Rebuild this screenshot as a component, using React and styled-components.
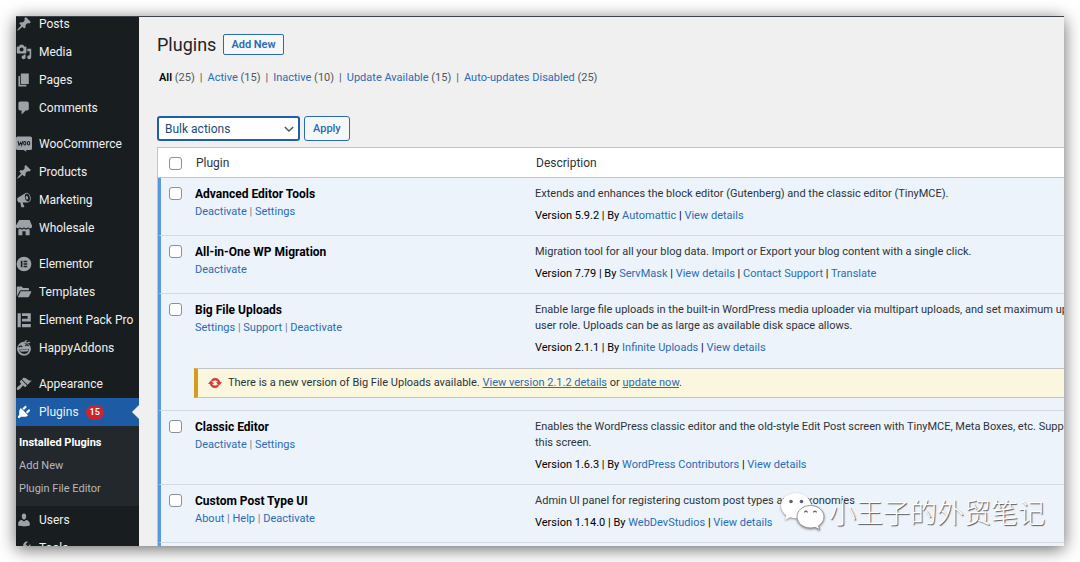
import React from "react";
import styled, { createGlobalStyle, css } from "styled-components";

const GlobalStyle = createGlobalStyle`
  * {
    box-sizing: border-box;
  }
  body {
    margin: 0;
    background: #ffffff;
    color: #2c3338;
    font-family: Roboto, "Liberation Sans", sans-serif;
    font-size: 11px;
    line-height: 16px;
  }
  a {
    color: #2a6cb4;
    text-decoration: none;
  }
`;

const Window = styled.div`
  position: relative;
  display: flex;
  height: calc(100vh - 32px);
  margin: 16px;
  overflow: hidden;
  background: #f0f0f0;
  border-top: 1px solid #3c434a;
`;

const Shadow = styled.div`
  display: flow-root;
  & > ${Window} {
    box-shadow: 0 3px 16px rgba(0, 0, 0, 0.6);
  }
`;

const Sidebar = styled.nav`
  flex: 0 0 123px;
  background: #181d1f;
`;

const Menu = styled.ul`
  list-style: none;
  margin: -7px 0 0;
  padding: 0;
`;

const MenuGroup = styled.li`
  margin-bottom: 8px;
  ul {
    list-style: none;
    margin: 0;
    padding: 0;
  }
`;

const MenuLink = styled.a`
  position: relative;
  display: flex;
  align-items: center;
  gap: 7px;
  height: 28px;
  color: #f0f0f1;
  font-size: 12px;
  white-space: nowrap;
  svg {
    flex: none;
    width: 16px;
    height: 16px;
    color: #9ca2a7;
  }
  ${({ $active }) =>
    $active &&
    css`
      background: #1d5ca4;
      svg {
        color: #ffffff;
      }
      &::after {
        content: "";
        position: absolute;
        right: 0;
        top: 7px;
        border: 7px solid transparent;
        border-left-width: 0;
        border-right-color: #f0f0f0;
      }
    `}
`;

const Badge = styled.span`
  padding: 0 4px;
  border-radius: 8px;
  background: #ca2430;
  color: #ffffff;
  font-size: 9px;
  line-height: 15px;
  font-weight: 600;
`;

const SubMenu = styled.ul`
  padding: 5px 0 6px !important;
  background: #23282c;
`;

const SubLink = styled.a`
  display: block;
  padding-left: 3px;
  color: ${({ $current }) => ($current ? "#ffffff" : "#b4b9be")};
  font-size: 11px;
  font-weight: ${({ $current }) => ($current ? 700 : 400)};
  line-height: 23px;
`;

const Main = styled.main`
  flex: 1;
  min-width: 0;
  padding: 17px 0 0 18px;
  overflow: hidden;
`;

const TitleBar = styled.header`
  display: flex;
  align-items: center;
  gap: 7px;
`;

const Title = styled.h1`
  margin: 0;
  color: #1d2327;
  font-size: 18px;
  font-weight: 400;
  line-height: 21px;
`;

const Button = styled.button`
  height: ${({ $small }) => ($small ? 21 : 25)}px;
  padding: 0 ${({ $small }) => ($small ? 7 : 8)}px;
  border: 1px solid #2a6cb4;
  border-radius: ${({ $small }) => ($small ? 2 : 3)}px;
  background: #f6f7f7;
  color: #2a6cb4;
  font-family: inherit;
  font-size: 11px;
  font-weight: ${({ $small }) => ($small ? 600 : 500)};
`;

const Filters = styled.ul`
  display: flex;
  gap: 5px;
  list-style: none;
  margin: 15px 0 0;
  padding: 0 0 0 2px;
  color: #50575e;
  white-space: nowrap;
  li + li::before {
    content: "|";
    margin-right: 5px;
  }
`;

const FilterLink = styled.a`
  color: ${({ $current }) => ($current ? "#000000" : "#2a6cb4")};
  font-weight: ${({ $current }) => ($current ? 600 : 400)};
`;

const Actions = styled.div`
  display: flex;
  gap: 4px;
  margin: 30px 0 6px;
`;

const SelectBox = styled.label`
  position: relative;
  display: flex;
  svg {
    position: absolute;
    right: 5px;
    top: 7px;
    width: 12px;
    height: 12px;
    color: #50575e;
    pointer-events: none;
  }
`;

const Select = styled.select`
  appearance: none;
  width: 143px;
  height: 25px;
  padding: 0 20px 0 6px;
  border: 2px solid #1f5fa8;
  border-radius: 3px;
  background: #ffffff;
  color: #1d4a7a;
  font-family: inherit;
  font-size: 12px;
`;

const Checkbox = styled.input`
  appearance: none;
  display: block;
  width: 13px;
  height: 13px;
  margin: 1px 0 0 8px;
  border: 1px solid #8c8f94;
  border-radius: 3px;
  background: #ffffff;
`;

const Table = styled.table`
  width: calc(100% + 40px);
  table-layout: fixed;
  border: 1px solid #c3c4c7;
  border-spacing: 0;
  background: #ffffff;
  white-space: nowrap;
`;

const CheckCol = styled.col`
  width: 37px;
`;

const NameCol = styled.col`
  width: 340px;
`;

const HeadCell = styled.th`
  padding: ${({ $check }) => ($check ? "7px 0 6px 3px" : "7px 0 6px 1px")};
  border-bottom: 1px solid #c3c4c7;
  font-size: 12px;
  font-weight: 400;
  text-align: left;
`;

const Cell = styled.td`
  padding: 8px 0 ${({ $joined }) => ($joined ? 12 : 11)}px;
  border-bottom: ${({ $joined }) => ($joined ? "0" : "1px solid #d3dce5")};
  ${({ $stripe }) => $stripe && "border-left: 3px solid #5b97dc;"}
  background: #ecf3fb;
  vertical-align: top;
`;

const NoticeCell = styled(Cell)`
  padding: 0 0 12px 33px;
`;

const Name = styled.strong`
  display: block;
  margin-bottom: 2px;
  color: #000000;
  font-size: 12px;
  font-weight: 700;
`;

const Links = styled.div`
  color: #787c82;
`;

const Description = styled.p`
  margin: 0 0 6px;
`;

const Meta = styled.div`
  color: #000000;
`;

const Notice = styled.div`
  display: flex;
  align-items: center;
  gap: 6px;
  height: 30px;
  padding-left: 10px;
  border: 1px solid #c3c4c7;
  border-left: 4px solid #d59b1c;
  background: #fbf7df;
  svg {
    width: 14px;
    height: 14px;
    color: #d63638;
    stroke: currentColor;
  }
  a {
    text-decoration: underline;
  }
`;

const Watermark = styled.div`
  position: absolute;
  right: 19px;
  bottom: 14px;
  display: flex;
  align-items: center;
  gap: 3px;
  color: #ffffff;
  font-family: "Noto Sans CJK SC", sans-serif;
  font-size: 27px;
  font-weight: 300;
  line-height: 38px;
  text-shadow: 1px 1px 1px #555555;
  svg {
    width: 46px;
    height: 40px;
    filter: drop-shadow(0 1px 1px #888888);
  }
`;

const paths = {
  pin: "M10.44 3.02l1.82-1.82 6.36 6.35-1.83 1.82c-1.05-.68-2.48-.57-3.41.36l-.75.75c-.92.93-1.04 2.35-.35 3.41l-1.83 1.82-2.41-2.41-2.8 2.79c-.42.42-3.38 2.71-3.8 2.29s1.86-3.39 2.28-3.81l2.79-2.79L4.1 9.36l1.83-1.82c1.05.69 2.48.57 3.4-.36l.75-.75c.93-.92 1.05-2.35.36-3.41z",
  media:
    "M13 11V4c0-.55-.45-1-1-1h-1.67L9 1H5L3.67 3H2c-.55 0-1 .45-1 1v7c0 .55.45 1 1 1h10c.55 0 1-.45 1-1zM7 4.5c1.38 0 2.5 1.12 2.5 2.5S8.38 9.5 7 9.5 4.5 8.38 4.5 7 5.62 4.5 7 4.5zM14 6h5v10.5c0 1.38-1.12 2.5-2.5 2.5S14 17.88 14 16.5s1.12-2.5 2.5-2.5c.17 0 .34.02.5.05V9h-3V6zm-4 8.05V13h2v3.5c0 1.38-1.12 2.5-2.5 2.5S7 17.88 7 16.5 8.12 14 9.5 14c.17 0 .34.02.5.05z",
  page: "M6 15V2h10v13H6zm-1 1h8v2H3V5h2v11z",
  comment:
    "M5 2h9c1.1 0 2 .9 2 2v7c0 1.1-.9 2-2 2h-2l-5 5v-5H5c-1.1 0-2-.9-2-2V4c0-1.1.9-2 2-2z",
  megaphone:
    "M18.15 5.94c.46 1.62.38 3.22-.02 4.48-.42 1.28-1.26 2.18-2.3 2.48-.16.06-.26.06-.4.06-.06.02-.12.02-.18.02-.06.02-.14.02-.22.02h-6.8l2.22 5.5c.02.14-.06.26-.14.34-.08.1-.24.16-.34.16H6.95c-.1 0-.26-.06-.34-.16-.08-.08-.16-.2-.14-.34l-1-5.5H4.25l-.02-.02c-.5.06-1.08-.18-1.54-.62s-.88-1.08-1.06-1.88c-.24-.8-.2-1.56-.02-2.2.18-.62.58-1.08 1.06-1.3l.02-.02 9-5.4c.1-.06.18-.1.24-.16.06-.04.14-.08.24-.12.16-.08.28-.12.5-.18 1.04-.3 2.24.1 3.22.98s1.84 2.24 2.26 3.86zm-2.58 5.98h-.02c.4-.1.74-.34 1.04-.7.58-.7.86-1.76.86-3.04 0-.64-.1-1.3-.28-1.98-.34-1.36-1.02-2.5-1.78-3.24s-1.68-1.1-2.46-.88c-.82.22-1.4.96-1.7 2-.32 1.04-.28 2.36.06 3.72.38 1.36 1 2.5 1.8 3.24.78.74 1.62 1.1 2.48.88zm-2.54-7.08c.22-.04.42-.02.62.04.38.16.76.48 1.02 1s.42 1.2.42 1.78c0 .3-.04.56-.12.8-.18.48-.44.84-.86.94-.34.1-.8-.06-1.14-.4s-.64-.86-.78-1.5c-.18-.62-.12-1.24.02-1.72s.48-.84.82-.94z",
  store:
    "M1 10c.41.29.96.43 1.5.43.55 0 1.09-.14 1.5-.43.62-.46 1-1.17 1-2 0 .83.37 1.54 1 2 .41.29.96.43 1.5.43.55 0 1.09-.14 1.5-.43.62-.46 1-1.17 1-2 0 .83.37 1.54 1 2 .41.29.96.43 1.51.43.54 0 1.08-.14 1.49-.43.62-.46 1-1.17 1-2 0 .83.37 1.54 1 2 .41.29.96.43 1.5.43.55 0 1.09-.14 1.5-.43.63-.46 1-1.17 1-2V7l-3-7H4L0 7v1c0 .83.37 1.54 1 2zm2 8.99h5v-5h4v5h5v-7c-.37-.05-.72-.22-1-.43-.63-.45-1-.73-1-1.56 0 .83-.38 1.11-1 1.56-.41.3-.95.43-1.49.44-.55 0-1.1-.14-1.51-.44-.63-.45-1-.73-1-1.56 0 .83-.38 1.11-1 1.56-.41.3-.95.43-1.5.44-.54 0-1.09-.14-1.5-.44-.63-.45-1-.73-1-1.57 0 .84-.38 1.12-1 1.57-.29.21-.63.38-1 .44v6.99z",
  folder:
    "M1 15.5V4.2c0-.6.4-1 1-1h5l1.8 1.9h6.4c.6 0 1 .4 1 1v1.6H6.3c-.8 0-1.4.4-1.7 1.1zM2.2 16.5L5.6 9.7c.2-.4.5-.6.9-.6h12c.5 0 .8.5.6.9l-2.8 5.7c-.2.5-.7.8-1.2.8z",
  brush:
    "M14.48 11.06L7.41 3.99l1.5-1.5c.5-.56 2.3-.47 3.51.32 1.21.8 1.43 1.28 2.91 2.1 1.18.64 2.45 1.26 4.45.85zm-.71.71L6.7 4.7 4.93 6.47c-.39.39-.39 1.02 0 1.41l1.06 1.06c.39.39.39 1.03 0 1.42-.6.6-1.43 1.11-2.21 1.69-.35.26-.7.53-1.01.84C1.43 14.23.4 16.08 1.4 17.07c.99 1 2.84-.03 4.18-1.36.31-.31.58-.66.85-1.02.57-.78 1.08-1.61 1.69-2.21.39-.39 1.02-.39 1.41 0l1.06 1.06c.39.39 1.02.39 1.41 0z",
  plug: "M13.11 4.36L9.87 7.6 8 5.73l3.24-3.24c.35-.34 1.05-.2 1.56.32.52.51.66 1.21.31 1.55zm-8 1.77l.91-1.12 9.01 9.01-1.19.84c-.71.71-2.63 1.16-3.82 1.16H6.14L4.9 17.26c-.59.59-1.54.59-2.12 0-.59-.58-.59-1.53 0-2.12l1.24-1.24v-3.88c0-1.13.4-3.19 1.09-3.89zm7.26 3.97l3.24-3.24c.34-.35 1.04-.21 1.55.31.52.51.66 1.21.31 1.55l-3.24 3.25z",
  user: "M10 9.25c-2.27 0-2.73-3.44-2.73-3.44C7 4.02 7.82 2 9.97 2c2.16 0 2.98 2.02 2.71 3.81 0 0-.41 3.44-2.68 3.44zm0 2.57L12.72 10c2.39 0 4.52 2.33 4.52 4.53v2.49s-3.65 1.13-7.24 1.13c-3.65 0-7.24-1.13-7.24-1.13v-2.49c0-2.25 1.94-4.48 4.47-4.48z",
  wrench:
    "M16.68 9.77c-1.34 1.34-3.3 1.67-4.95.99l-5.41 6.52c-.99.99-2.59.99-3.58 0s-.99-2.59 0-3.57l6.52-5.42c-.68-1.65-.35-3.61.99-4.95 1.28-1.28 3.12-1.62 4.72-1.06l-2.89 2.89 2.82 2.82 2.86-2.87c.53 1.58.18 3.39-1.08 4.65zM3.81 16.21c.4.39 1.04.39 1.43 0 .4-.4.4-1.04 0-1.43-.39-.4-1.03-.4-1.43 0-.39.39-.39 1.03 0 1.43z",
  update:
    "M10.2 3.28c3.53 0 6.43 2.61 6.92 6h2.08l-3.5 4-3.5-4h2.32c-.45-1.97-2.21-3.45-4.32-3.45-1.45 0-2.73.71-3.54 1.78L4.95 5.66C6.23 4.2 8.11 3.28 10.2 3.28zm-.4 13.44c-3.52 0-6.43-2.61-6.92-6H.8l3.5-4c1.17 1.33 2.33 2.67 3.5 4H5.48c.45 1.97 2.21 3.45 4.32 3.45 1.45 0 2.73-.71 3.54-1.78l1.71 1.95c-1.28 1.46-3.15 2.38-5.25 2.38z",
  // the product logos below are plain shapes on the same 20px grid
  elementor:
    "M10 .8a9.2 9.2 0 100 18.4 9.2 9.2 0 000-18.4zM6 6h2v8H6zM9.5 6H14v1.7H9.5zM9.5 9.15H14v1.7H9.5zM9.5 12.3H14V14H9.5z",
  elementPack:
    "M2 1.5h4v17.5H2zM7.5 1.5H18.5v10.5H7.5V8.5H14.5V5H7.5zM7.5 15H18.5v4H7.5z",
};

const Icon = ({ name }) => (
  <svg viewBox="0 0 20 20" fill="currentColor" fillRule="evenodd" aria-hidden="true">
    <path d={paths[name]} />
  </svg>
);

const WooIcon = () => (
  <svg viewBox="0 0 20 20" aria-hidden="true">
    <path
      fill="currentColor"
      d="M2 .5h16a2 2 0 012 2v13a2 2 0 01-2 2h-5.500l.8 2.300-4-2.300H2a2 2 0 01-2-2v-13a2 2 0 012-2z"
    />
    <g fill="none" stroke="#181d1f" strokeWidth="1.300">
      <path d="M2.500 6.500l1.300 5 2-3.500 1.200 3.500L8.500 6.500" />
      <ellipse cx="11" cy="9" rx="1.400" ry="2.200" />
      <ellipse cx="15.700" cy="9" rx="1.400" ry="2.200" />
    </g>
  </svg>
);

const HappyIcon = () => (
  <svg viewBox="0 0 20 20" aria-hidden="true">
    <circle cx="10" cy="11" r="8.700" fill="currentColor" />
    <path d="M11 3.500c0-2 1.500-3 3-2.500M14.500 4.500c.5-1.600 2-2 3.200-1.200" fill="none" stroke="currentColor" strokeWidth="1.400" />
    <g fill="none" stroke="#181d1f" strokeWidth="1.500">
      <path d="M3.500 9.200c.8-1.800 3-2.200 4.300-.7M11.500 7.500c.9-1.700 3.300-1.800 4.400-.2" />
      <path d="M10.500 3.500c1 1.500 3 2 5 1.300" strokeWidth="1" />
    </g>
    <path d="M4 12.200l12.300-1c0 3.500-2.300 6-5.800 6.200-3.200.1-5.800-2-6.500-5.200z" fill="#181d1f" />
    <path d="M5 12.400l10.500-.8v2.400l-9.500.8z" fill="currentColor" />
  </svg>
);

const ChevronIcon = () => (
  <svg viewBox="0 0 20 20" fill="none" stroke="currentColor" strokeWidth="2.400" aria-hidden="true">
    <path d="M3 6.500l7 7 7-7" />
  </svg>
);

const WeChatIcon = () => (
  <svg viewBox="0 0 46 40" aria-hidden="true">
    <path
      fill="#ffffff"
      d="M16 1C7.500 1 1 6.700 1 13.800c0 4 2.100 7.500 5.400 9.800L5 28l5.200-2.700c1.800.6 3.800.9 5.800.9 8.300 0 15-5.600 15-12.400S24.300 1 16 1z"
    />
    <circle cx="11" cy="9.500" r="1.800" fill="#59636d" />
    <circle cx="21.500" cy="9.500" r="1.800" fill="#59636d" />
    <path
      fill="#ffffff"
      stroke="#8d959d"
      strokeWidth="1"
      d="M30.500 13.500c-7.500 0-13.500 5-13.500 11.300S23 36 30.500 36c1.600 0 3.200-.2 4.600-.7l4.700 2.500-1.300-3.900c3.300-2 5.500-5.400 5.500-9.100 0-6.300-6-11.300-13.500-11.300z"
    />
    <path
      d="M24.500 20.500c.2-1.800 2.600-1.800 2.800 0M33.500 20.500c.2-1.800 2.600-1.800 2.800 0"
      fill="none"
      stroke="#59636d"
      strokeWidth="1.400"
    />
  </svg>
);

const menu = [
  [
    { label: "Posts", icon: <Icon name="pin" /> },
    { label: "Media", icon: <Icon name="media" /> },
    { label: "Pages", icon: <Icon name="page" /> },
    { label: "Comments", icon: <Icon name="comment" /> },
  ],
  [
    { label: "WooCommerce", icon: <WooIcon /> },
    { label: "Products", icon: <Icon name="pin" /> },
    { label: "Marketing", icon: <Icon name="megaphone" /> },
    { label: "Wholesale", icon: <Icon name="store" /> },
  ],
  [
    { label: "Elementor", icon: <Icon name="elementor" /> },
    { label: "Templates", icon: <Icon name="folder" /> },
    { label: "Element Pack Pro", icon: <Icon name="elementPack" /> },
    { label: "HappyAddons", icon: <HappyIcon /> },
  ],
  [
    { label: "Appearance", icon: <Icon name="brush" /> },
    {
      label: "Plugins",
      icon: <Icon name="plug" />,
      count: 15,
      children: ["Installed Plugins", "Add New", "Plugin File Editor"],
    },
    { label: "Users", icon: <Icon name="user" /> },
    { label: "Tools", icon: <Icon name="wrench" /> },
  ],
];

const filters = [
  ["All", 25],
  ["Active", 15],
  ["Inactive", 10],
  ["Update Available", 15],
  ["Auto-updates Disabled", 25],
];

const plugins = [
  {
    name: "Advanced Editor Tools",
    actions: ["Deactivate", "Settings"],
    lines: [
      "Extends and enhances the block editor (Gutenberg) and the classic editor (TinyMCE).",
    ],
    version: "5.9.2",
    links: ["Automattic", "View details"],
  },
  {
    name: "All-in-One WP Migration",
    actions: ["Deactivate"],
    lines: [
      "Migration tool for all your blog data. Import or Export your blog content with a single click.",
    ],
    version: "7.79",
    links: ["ServMask", "View details", "Contact Support", "Translate"],
  },
  {
    name: "Big File Uploads",
    actions: ["Settings", "Support", "Deactivate"],
    lines: [
      "Enable large file uploads in the built-in WordPress media uploader via multipart uploads, and set maximum upload",
      "user role. Uploads can be as large as available disk space allows.",
    ],
    version: "2.1.1",
    links: ["Infinite Uploads", "View details"],
    update: "2.1.2",
  },
  {
    name: "Classic Editor",
    actions: ["Deactivate", "Settings"],
    lines: [
      "Enables the WordPress classic editor and the old-style Edit Post screen with TinyMCE, Meta Boxes, etc. Supports",
      "this screen.",
    ],
    version: "1.6.3",
    links: ["WordPress Contributors", "View details"],
  },
  {
    name: "Custom Post Type UI",
    actions: ["About", "Help", "Deactivate"],
    lines: ["Admin UI panel for registering custom post types and taxonomies"],
    version: "1.14.0",
    links: ["WebDevStudios", "View details"],
  },
];

const LinkList = ({ items }) =>
  items.map((item, index) => (
    <React.Fragment key={item}>
      {index > 0 && " | "}
      <a href="#">{item}</a>
    </React.Fragment>
  ));

const PluginRow = ({ plugin }) => {
  const joined = Boolean(plugin.update);
  return (
    <>
      <tr>
        <Cell $stripe $joined={joined}>
          <Checkbox type="checkbox" aria-label={`Select ${plugin.name}`} />
        </Cell>
        <Cell $joined={joined}>
          <Name>{plugin.name}</Name>
          <Links>
            <LinkList items={plugin.actions} />
          </Links>
        </Cell>
        <Cell $joined={joined}>
          <Description>
            {plugin.lines.map((line, index) => (
              <React.Fragment key={line}>
                {index > 0 && <br />}
                {line}
              </React.Fragment>
            ))}
          </Description>
          <Meta>
            Version {plugin.version} | By <LinkList items={plugin.links} />
          </Meta>
        </Cell>
      </tr>
      {plugin.update && (
        <tr>
          <NoticeCell $stripe colSpan={3}>
            <Notice>
              <Icon name="update" />
              <span>
                There is a new version of {plugin.name} available.{" "}
                <a href="#">View version {plugin.update} details</a> or{" "}
                <a href="#">update now</a>.
              </span>
            </Notice>
          </NoticeCell>
        </tr>
      )}
    </>
  );
};

const App = () => {
  return (
    <Shadow>
      <GlobalStyle />
      <Window>
        <Sidebar>
          <Menu>
            {menu.map((group, index) => (
              <MenuGroup key={index}>
                <ul>
                  {group.map((item) => (
                    <li key={item.label}>
                      <MenuLink href="#" $active={Boolean(item.children)}>
                        {item.icon}
                        {item.label}
                        {item.count && <Badge>{item.count}</Badge>}
                      </MenuLink>
                      {item.children && (
                        <SubMenu>
                          {item.children.map((child, i) => (
                            <li key={child}>
                              <SubLink href="#" $current={i === 0}>
                                {child}
                              </SubLink>
                            </li>
                          ))}
                        </SubMenu>
                      )}
                    </li>
                  ))}
                </ul>
              </MenuGroup>
            ))}
          </Menu>
        </Sidebar>
        <Main>
          <TitleBar>
            <Title>Plugins</Title>
            <Button $small>Add New</Button>
          </TitleBar>
          <Filters>
            {filters.map(([label, count], index) => (
              <li key={label}>
                <FilterLink href="#" $current={index === 0}>
                  {label}
                </FilterLink>{" "}
                ({count})
              </li>
            ))}
          </Filters>
          <Actions>
            <SelectBox>
              <Select aria-label="Bulk actions">
                <option>Bulk actions</option>
                <option>Activate</option>
                <option>Deactivate</option>
              </Select>
              <ChevronIcon />
            </SelectBox>
            <Button>Apply</Button>
          </Actions>
          <Table>
            <colgroup>
              <CheckCol />
              <NameCol />
              <col />
            </colgroup>
            <thead>
              <tr>
                <HeadCell $check>
                  <Checkbox type="checkbox" aria-label="Select all" />
                </HeadCell>
                <HeadCell>Plugin</HeadCell>
                <HeadCell>Description</HeadCell>
              </tr>
            </thead>
            <tbody>
              {plugins.map((plugin) => (
                <PluginRow key={plugin.name} plugin={plugin} />
              ))}
              <tr>
                <Cell $stripe />
                <Cell />
                <Cell />
              </tr>
            </tbody>
          </Table>
        </Main>
        <Watermark>
          <WeChatIcon />
          小王子的外贸笔记
        </Watermark>
      </Window>
    </Shadow>
  );
};

export default App;
